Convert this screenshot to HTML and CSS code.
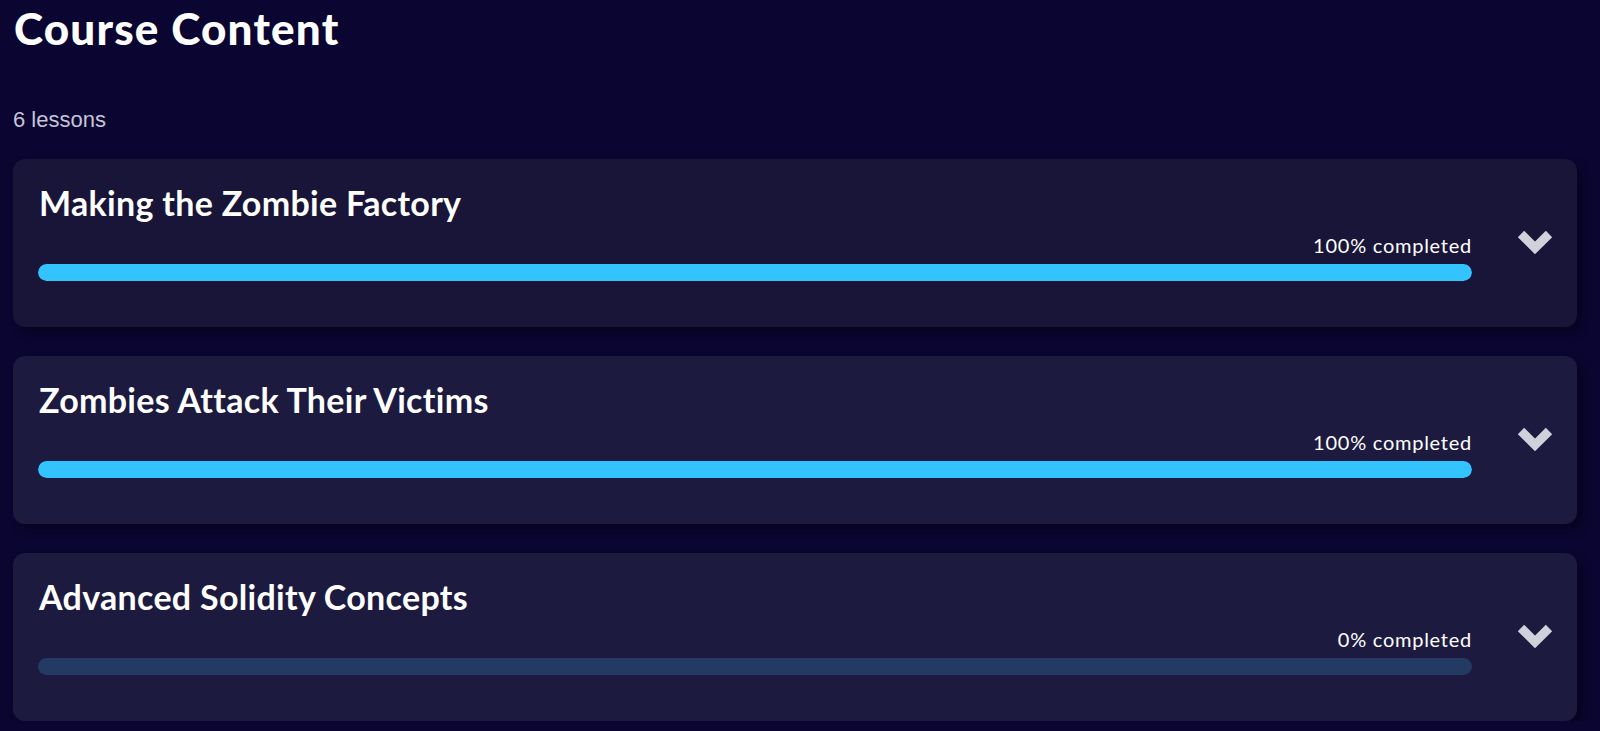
FILE: index.html
```html
<!DOCTYPE html>
<html lang="en">
<head>
<meta charset="utf-8">
<title>Course Content</title>
<link rel="stylesheet" href="styles.css">
</head>
<body>
<main class="page">
  <h1 class="page-title">Course Content</h1>
  <p class="lesson-count">6 lessons</p>
  <div class="chapters">
    <section class="chapter chapter-first">
      <div class="chapter-main">
        <h2 class="chapter-title">Making the Zombie Factory</h2>
        <div class="progress-label">100% completed</div>
        <div class="progress"><div class="progress-fill" style="width:100%"></div></div>
      </div>
      <svg class="chevron" viewBox="0 0 34 24" width="34" height="24" aria-hidden="true"><polyline points="3,3 17,17 31,3" /></svg>
    </section>
    <section class="chapter">
      <div class="chapter-main">
        <h2 class="chapter-title">Zombies Attack Their Victims</h2>
        <div class="progress-label">100% completed</div>
        <div class="progress"><div class="progress-fill" style="width:100%"></div></div>
      </div>
      <svg class="chevron" viewBox="0 0 34 24" width="34" height="24" aria-hidden="true"><polyline points="3,3 17,17 31,3" /></svg>
    </section>
    <section class="chapter">
      <div class="chapter-main">
        <h2 class="chapter-title">Advanced Solidity Concepts</h2>
        <div class="progress-label">0% completed</div>
        <div class="progress"><div class="progress-fill" style="width:0%"></div></div>
      </div>
      <svg class="chevron" viewBox="0 0 34 24" width="34" height="24" aria-hidden="true"><polyline points="3,3 17,17 31,3" /></svg>
    </section>
  </div>
</main>
</body>
</html>
```
FILE: styles.css
```css
html, body {
  margin: 0;
  padding: 0;
  background: #0b0531;
  overflow: hidden;
}

.page {
  padding: 2px 23px 0 13px;
  font-family: Lato, "Noto Sans", sans-serif;
  color: #ffffff;
}

.page-title {
  margin: 0;
  font-size: 44px;
  line-height: 52px;
  font-weight: 900;
  letter-spacing: 1.2px;
  padding-left: 1px;
}

.lesson-count {
  margin: 53px 0 0 0;
  font-family: "Liberation Sans", Arial, sans-serif;
  font-size: 22px;
  line-height: 26px;
  color: #c6c4d8;
}

.chapters {
  margin-top: 26px;
  display: flex;
  flex-direction: column;
  gap: 29px;
}

.chapter {
  display: flex;
  align-items: center;
  gap: 46px;
  background: #1d1a40;
  border-radius: 12px;
  padding: 23px 25px 46px 25px;
  box-shadow: 6px 6px 10px rgba(0, 0, 0, 0.35);
  height: 168px;
  box-sizing: border-box;
}

.chapter-first {
  background: #181538;
}

.chapter-main {
  flex: 1;
  display: flex;
  flex-direction: column;
  align-self: flex-start;
}

.chapter-title {
  margin: 0;
  font-size: 34px;
  line-height: 42px;
  font-weight: 700;
  letter-spacing: 0.3px;
  padding-left: 1px;
}

.progress-label {
  margin-top: 9px;
  text-align: right;
  font-size: 20px;
  line-height: 24px;
  font-weight: 400;
  letter-spacing: 0.75px;
}

.progress {
  margin-top: 7px;
  height: 17px;
  border-radius: 9px;
  background: #233a63;
  overflow: hidden;
}

.progress-fill {
  height: 100%;
  background: #33c3ff;
  border-radius: 9px;
}

.chevron {
  flex: none;
  overflow: visible;
  margin-top: 23px;
}

.chevron polyline {
  fill: none;
  stroke: #d1d1db;
  stroke-width: 9;
  stroke-linecap: butt;
  stroke-linejoin: miter;
}
```
